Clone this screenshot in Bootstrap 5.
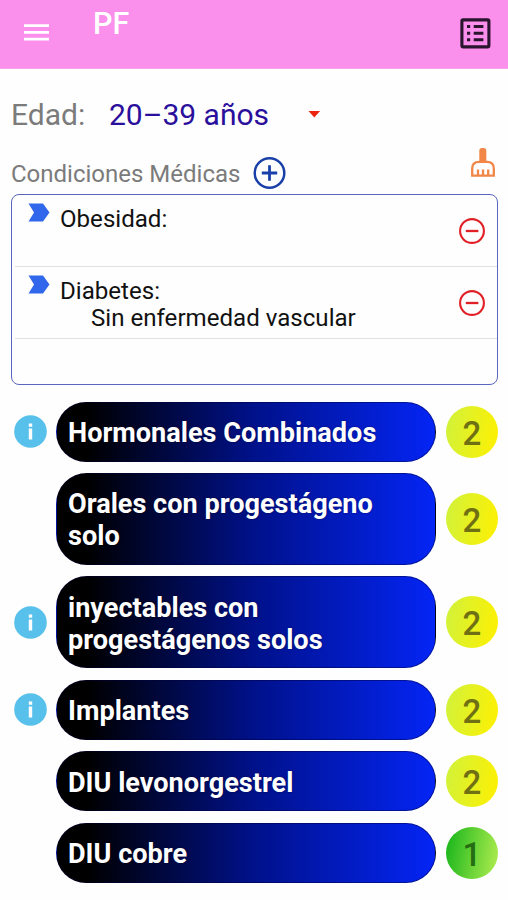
<!DOCTYPE html>
<html lang="es">
<head>
<meta charset="utf-8">
<meta name="viewport" content="width=device-width, initial-scale=1">
<title>PF</title>
<link href="https://cdn.jsdelivr.net/npm/bootstrap@5.3.0/dist/css/bootstrap.min.css" rel="stylesheet">
<style>
body{font-family:Roboto,"Liberation Sans",sans-serif;background:#fefefe;color:#111;height:900px;overflow:hidden}
svg{display:block;flex:none}
.topbar{height:69px;background:#fa8fec;padding:0 17px 0 24px;border-bottom:1px solid #f6a5ec}
.app-title{font-size:30.5px;font-weight:500;line-height:34px;margin:7px 0 0 44px}
.age-row{height:46px;margin-top:23px;padding-left:11px;font-size:30px;line-height:46px}
.age-label{width:98px;color:#7b7b7b}
.age-value{width:199px;color:#2a0f9c}
.cond-row{height:56px;padding:0 12px 0 11px}
.cond-title{width:242px;font-size:24px;line-height:30px;color:#7b7b7b;margin-top:21px}
.cond-box{margin:0 10px 0 11px;height:191px;border:1.5px solid #5966bd;border-radius:8px;padding:0 0 0 3px}
.cond-item{border-bottom:1.5px solid #e2e2e4;font-size:24.1px;line-height:28px;height:72px;padding:8px 11px 0 13px}
.cond-text{margin-left:10px;padding-top:2px}
.cond-detail{padding-left:31px;line-height:27px}
.methods{display:grid;gap:11.4px;margin-top:16.6px;padding-left:14px;padding-right:10px}
.info-slot{width:42px}
.pill{width:380px;min-height:60px;border-radius:31px;padding:3px 12px 0 11px;font-size:27.1px;line-height:32px;font-weight:700;color:#fff;background:linear-gradient(90deg,#000 8%,#00118a 52%,#0425f5 100%);border:1px solid rgba(0,0,60,.45);text-shadow:0 0 2px rgba(0,0,0,.5)}
.pill.tall{min-height:92px}
.grade{width:52px;height:52px;font-size:33px;line-height:55px;font-weight:500;color:#6f7013;background:linear-gradient(100deg,#d0f23c,#fff000)}
.grade.best{color:#246d13;background:linear-gradient(100deg,#14b41a,#b3ee50)}
</style>
<script src="https://cdn.jsdelivr.net/npm/bootstrap@5.3.0/dist/js/bootstrap.bundle.min.js"></script>
</head>
<body>
<svg width="0" height="0" class="position-absolute">
<symbol id="info" viewBox="0 0 33 33"><circle cx="16.5" cy="16.5" r="16.3" fill="#57c0eb"/><path d="M14.8 8.5h3.4v3.300h-3.400zM14.800 13.500h3.400v11h-3.400z" fill="#fff"/></symbol>
<symbol id="arrow" viewBox="0 0 22 19"><path d="M.5.5H15L21.500 9.500 15 18.500H.5L6 9.500z" fill="#3168eb"/></symbol>
<symbol id="minus" viewBox="0 0 28 28"><circle cx="14" cy="14" r="11.900" fill="none" stroke="#e12026" stroke-width="2.100"/><path d="M7.800 14h12.600" stroke="#e12026" stroke-width="2.300"/></symbol>
</svg>
<header class="topbar d-flex text-white">
<svg class="mt-4" width="25" height="18" viewBox="0 0 25 18"><path d="M0 1.700h25M0 8.400h25M0 15.200h25" stroke="#fff" stroke-width="2.800"/></svg>
<div class="app-title">PF</div>
<svg class="ms-auto" style="margin-top:18px" width="31" height="31" viewBox="0 0 31 31"><rect x="1.900" y="1.900" width="27" height="27" rx="1.300" fill="none" stroke="#29152d" stroke-width="3.100"/><path d="M7 8.600h3.200M7 15.200h3.200M7 21.800h3.200M13.700 8.600h9.700M13.700 15.200h9.700M13.700 21.800h9.700" stroke="#29152d" stroke-width="3"/></svg>
</header>
<main>
<div class="age-row d-flex">
<div class="age-label">Edad:</div><div class="age-value">20–39 años</div>
<svg class="align-self-center" width="13" height="10" viewBox="0 0 13 10"><path d="M.5 1h11.600L6.300 7.500z" fill="#ed250f"/></svg>
</div>
<div class="cond-row d-flex">
<div class="cond-title text-nowrap">Condiciones Médicas</div>
<svg style="margin-top:18px" width="33" height="34" viewBox="0 0 33 34"><circle cx="16.500" cy="17" r="14.800" fill="none" stroke="#1940a8" stroke-width="2.500"/><path d="M8.800 17h15.400M16.500 9.300v15.400" stroke="#1940a8" stroke-width="2.800"/></svg>
<svg class="ms-auto" style="margin-top:9px" width="26" height="31" viewBox="0 0 26 31"><path d="M9.300 15V3.500Q9.300 1 11.500 1H14q2.300 0 2.300 2.500V15z" fill="#f18648"/><path d="M2.200 28.700V21.500Q2.200 14.800 9 14.800H17Q23.800 14.800 23.800 21.500V28.700zM8 28V22.500M13 28V22.500M18.200 28V22.500" fill="none" stroke="#f18648" stroke-width="2.300"/></svg>
</div>
<section class="cond-box">
<div class="cond-item d-flex">
<svg width="22" height="19"><use href="#arrow"/></svg>
<div class="cond-text">Obesidad:</div>
<svg class="ms-auto" style="margin-top:14px" width="28" height="28"><use href="#minus"/></svg>
</div>
<div class="cond-item d-flex">
<svg width="22" height="19"><use href="#arrow"/></svg>
<div class="cond-text">Diabetes:<div class="cond-detail">Sin enfermedad vascular</div></div>
<svg class="ms-auto" style="margin-top:14px" width="28" height="28"><use href="#minus"/></svg>
</div>
</section>
<section class="methods">
<div class="d-flex align-items-center"><div class="info-slot"><svg width="33" height="33"><use href="#info"/></svg></div><div class="pill d-flex align-items-center">Hormonales Combinados</div><div class="grade rounded-circle text-center ms-auto">2</div></div>
<div class="d-flex align-items-center"><div class="info-slot"></div><div class="pill tall d-flex align-items-center">Orales con progestágeno solo</div><div class="grade rounded-circle text-center ms-auto">2</div></div>
<div class="d-flex align-items-center"><div class="info-slot"><svg width="33" height="33"><use href="#info"/></svg></div><div class="pill tall d-flex align-items-center"><span>inyectables con<br>progestágenos solos</span></div><div class="grade rounded-circle text-center ms-auto">2</div></div>
<div class="d-flex align-items-center"><div class="info-slot"><svg width="33" height="33"><use href="#info"/></svg></div><div class="pill d-flex align-items-center">Implantes</div><div class="grade rounded-circle text-center ms-auto">2</div></div>
<div class="d-flex align-items-center"><div class="info-slot"></div><div class="pill d-flex align-items-center">DIU levonorgestrel</div><div class="grade rounded-circle text-center ms-auto">2</div></div>
<div class="d-flex align-items-center"><div class="info-slot"></div><div class="pill d-flex align-items-center">DIU cobre</div><div class="grade best rounded-circle text-center ms-auto">1</div></div>
</section>
</main>
</body>
</html>
